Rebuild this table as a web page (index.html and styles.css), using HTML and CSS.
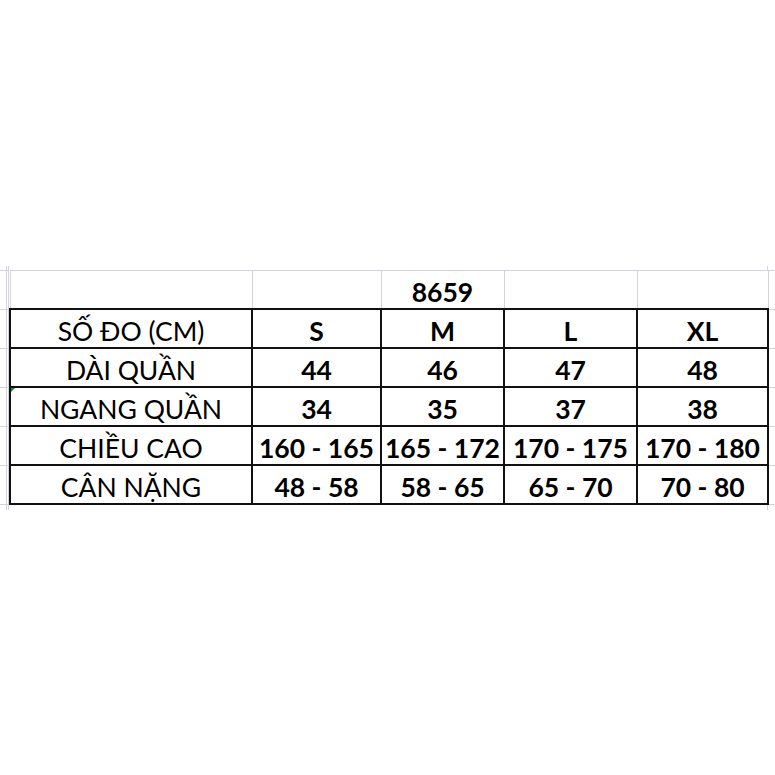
FILE: index.html
```html
<!DOCTYPE html>
<html lang="vi">
<head>
<meta charset="utf-8">
<title>8659 – Bảng size</title>
<link rel="stylesheet" href="styles.css">
</head>
<body>
<div class="sheet">
  <table class="size-table">
    <colgroup>
      <col class="c-label">
      <col class="c-s">
      <col class="c-m">
      <col class="c-l">
      <col class="c-xl">
    </colgroup>
    <tr class="top">
      <td></td><td></td><td class="b">8659</td><td></td><td></td>
    </tr>
    <tr>
      <td>SỐ ĐO (CM)</td><td class="b">S</td><td class="b">M</td><td class="b">L</td><td class="b">XL</td>
    </tr>
    <tr>
      <td>DÀI QUẦN</td><td class="b">44</td><td class="b">46</td><td class="b">47</td><td class="b">48</td>
    </tr>
    <tr>
      <td class="flag">NGANG QUẦN</td><td class="b">34</td><td class="b">35</td><td class="b">37</td><td class="b">38</td>
    </tr>
    <tr>
      <td>CHIỀU CAO</td><td class="b">160 - 165</td><td class="b">165 - 172</td><td class="b">170 - 175</td><td class="b">170 - 180</td>
    </tr>
    <tr>
      <td>CÂN NẶNG</td><td class="b">48 - 58</td><td class="b">58 - 65</td><td class="b">65 - 70</td><td class="b">70 - 80</td>
    </tr>
  </table>
</div>
</body>
</html>
```
FILE: styles.css
```css
html, body {
  margin: 0;
  background: #ffffff;
}
body {
  font-family: Lato, "Open Sans", "DejaVu Sans", sans-serif;
  color: #000;
}
.sheet {
  margin-top: 266px;
  height: 244px;
  box-sizing: border-box;
  padding: 4px 0 0 9px;
  background-image:
    linear-gradient(to right, transparent 6px, #d3d4db 6px 7px, transparent 7px 8px, #d3d4db 8px 9px, transparent 9px 767px, #d3d4db 767px 768px, transparent 768px),
    repeating-linear-gradient(to bottom, #d3d4db 0 1px, transparent 1px 39px);
  background-repeat: no-repeat, repeat;
  background-position: 0 0, 0 4px;
}
.size-table {
  width: 758px;
  border-collapse: collapse;
  table-layout: fixed;
  background: #fff;
}
.c-label { width: 242px; }
.c-s { width: 129px; }
.c-m { width: 123px; }
.c-l { width: 133px; }
.c-xl { width: 131px; }
.size-table td {
  height: 37px;
  padding: 0;
  border: 2px solid #111;
  text-align: center;
  vertical-align: bottom;
  font-size: 26.5px;
  line-height: 32px;
  white-space: nowrap;
  overflow: visible;
}
.size-table tr.top td {
  border: 1px solid #d3d4db;
}
.b { font-weight: 700; }
.flag { position: relative; }
.flag::before {
  content: "";
  position: absolute;
  left: 0;
  top: 0;
  border-top: 4px solid #1e8a3a;
  border-right: 4px solid transparent;
}
```
